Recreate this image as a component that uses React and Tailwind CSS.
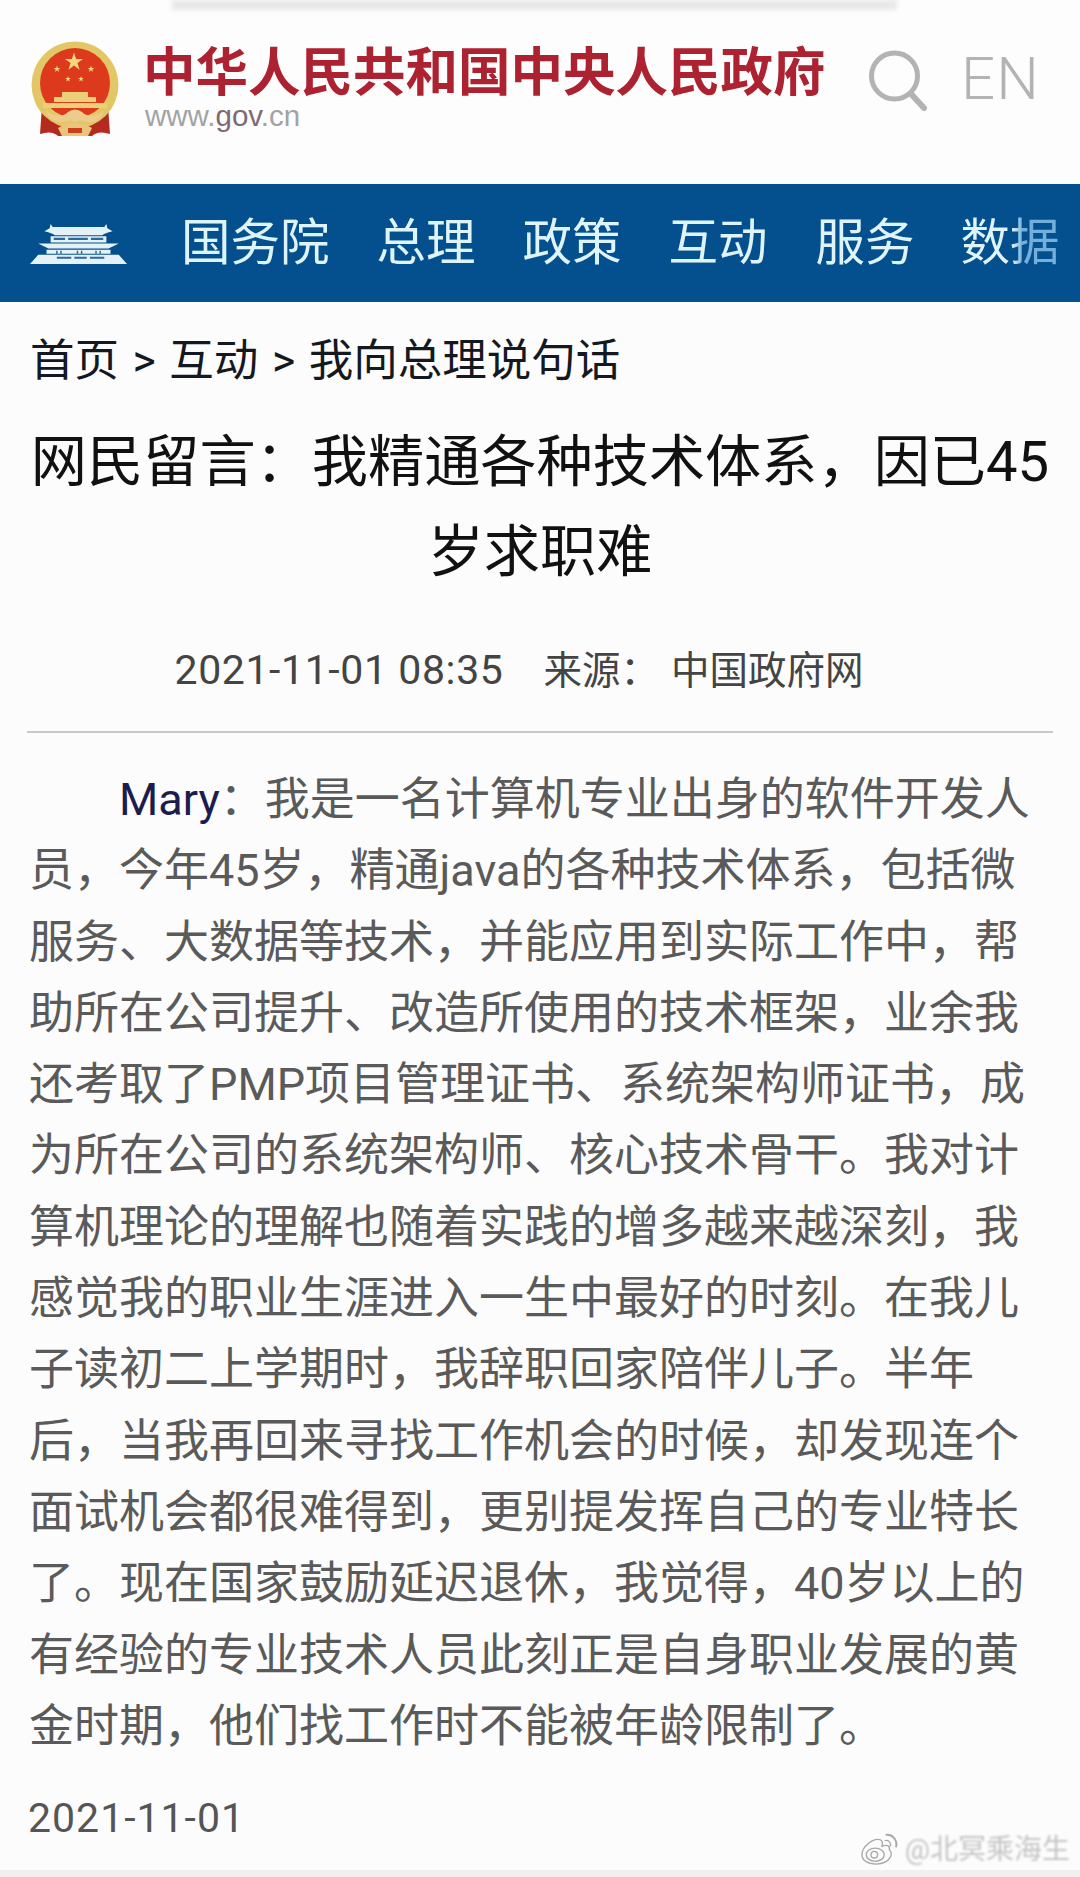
import React from "react";

const FONT = "font-['Roboto','Noto_Sans_CJK_SC',sans-serif]";

const LINES = [
  "员，今年45岁，精通java的各种技术体系，包括微",
  "服务、大数据等技术，并能应用到实际工作中，帮",
  "助所在公司提升、改造所使用的技术框架，业余我",
  "还考取了PMP项目管理证书、系统架构师证书，成",
  "为所在公司的系统架构师、核心技术骨干。我对计",
  "算机理论的理解也随着实践的增多越来越深刻，我",
  "感觉我的职业生涯进入一生中最好的时刻。在我儿",
  "子读初二上学期时，我辞职回家陪伴儿子。半年",
  "后，当我再回来寻找工作机会的时候，却发现连个",
  "面试机会都很难得到，更别提发挥自己的专业特长",
  "了。现在国家鼓励延迟退休，我觉得，40岁以上的",
  "有经验的专业技术人员此刻正是自身职业发展的黄",
  "金时期，他们找工作时不能被年龄限制了。",
];

function star(cx, cy, r, rot = 0) {
  const pts = [];
  for (let i = 0; i < 10; i++) {
    const a = (-90 + rot + i * 36) * (Math.PI / 180);
    const rad = i % 2 === 0 ? r : r * 0.38;
    pts.push(`${(cx + rad * Math.cos(a)).toFixed(2)},${(cy + rad * Math.sin(a)).toFixed(2)}`);
  }
  return pts.join(" ");
}

function Emblem() {
  return (
    <svg width="90" height="97" viewBox="0 0 90 97" className="shrink-0 blur-[0.6px]">
      <path d="M12 66 L10 94 Q22 90 28 96 L62 96 Q68 90 80 94 L78 66 Z" fill="#b52a1e" />
      <circle cx="45" cy="45" r="43.5" fill="#e3c766" />
      <circle cx="45" cy="43" r="35" fill="#dd3a1d" />
      <polygon points={star(44, 22, 9.5)} fill="#f2d67a" />
      <polygon points={star(27, 29, 3.6)} fill="#f2d67a" />
      <polygon points={star(61, 29, 3.6)} fill="#f2d67a" />
      <polygon points={star(38, 39, 3)} fill="#f2d67a" />
      <polygon points={star(51, 39, 3)} fill="#f2d67a" />
      <path d="M32 52 H58 V57 H66 V62 H24 V57 H32 Z" fill="#ecd078" />
      <path d="M13 63 H77 V68 H13 Z" fill="#ecd078" />
      <path d="M16 71 Q30 80 38 72 Q45 67 52 72 Q60 80 74 71 Q70 84 56 82 Q50 79 45 82 Q40 79 34 82 Q20 84 16 71 Z" fill="#eccb8c" />
      <path d="M28 88 Q45 78 62 88 L58 96 H32 Z" fill="#ebc47c" />
      <path d="M38 88 H52 V93 H38 Z" fill="#c9401f" />
    </svg>
  );
}

function Gate() {
  return (
    <svg width="97" height="43" viewBox="0 0 94 42" preserveAspectRatio="none" className="shrink-0 blur-[0.4px]">
      <path d="M14 9 L19 6 L20 2 L22 5 H72 L74 2 L75 6 L80 9 Q72 11 70 13 H24 Q22 11 14 9 Z" fill="#e4f2f8" />
      <path d="M20 14 H74 V20 H20 Z" fill="#e4f2f8" />
      <path d="M23 15.5 H34 V17.5 H23 Z M37 15.5 H56 V17.5 H37 Z M59 15.5 H71 V17.5 H59 Z" fill="#2a6a9c" />
      <path d="M8 21 H86 Q80 24 76 26 H18 Q14 24 8 21 Z" fill="#e4f2f8" />
      <path d="M16 27 H78 V31 H16 Z" fill="#e4f2f8" />
      <path d="M26 28 V34 M30 28 V34 M46 28 V34 M50 28 V34 M64 28 V34 M68 28 V34" stroke="#2a6a9c" strokeWidth="1.4" />
      <path d="M0 41 L8 32 H86 L94 41 Z" fill="#e4f2f8" />
      <path d="M26 34 H40 V36 H26 Z M43 34 H55 V36 H43 Z M58 34 H72 V36 H58 Z" fill="#2a6a9c" />
    </svg>
  );
}

function SearchIcon() {
  return (
    <svg width="60" height="62" viewBox="0 0 60 62" className="shrink-0">
      <circle cx="26.5" cy="26" r="23" fill="none" stroke="#b3b3b3" strokeWidth="5" />
      <path d="M44 45 L56 58" stroke="#b3b3b3" strokeWidth="6" strokeLinecap="round" />
    </svg>
  );
}

function WeiboIcon() {
  return (
    <svg width="40" height="34" viewBox="0 0 42 36" fill="none" stroke="#a8a8a8" strokeWidth="1.4" className="shrink-0">
      <path d="M3 23 C3 14 15 5 22 7 C25 8 25 11 24 14 C29 12 33 13 32 18 C36 20 35 32 18 33 C9 33 3 29 3 23 Z" fill="#fbfbfb" />
      <ellipse cx="17" cy="23" rx="9.5" ry="7" />
      <circle cx="16" cy="23" r="3.5" />
      <path d="M27 8 C31 7 34 10 33 14" />
      <path d="M28 2 C35 1 41 7 39 15" strokeWidth="2" />
    </svg>
  );
}

export default function App() {
  return (
    <div className={`${FONT} w-[1080px] h-[1877px] overflow-hidden bg-[#fcfcfc] flex flex-col`}>
      <header className="relative h-[184px] shrink-0 flex items-start pl-[30px] pt-[40px] bg-[#fdfdfd]">
        <div className="absolute left-[172px] top-0 w-[725px] h-[10px] bg-[#e8e8e8] blur-[2px]" />
        <Emblem />
        <div className="ml-[23px] w-[688px] flex flex-col">
          <div className="text-[52.5px] leading-[60px] font-bold text-[#ad2231] whitespace-nowrap mt-[-2px] font-['Noto_Sans_CJK_SC',sans-serif]">中华人民共和国中央人民政府</div>
          <div className="pl-[2px] text-[29.5px] leading-[30px] text-[#a3a3a3] mt-[3px] font-['Liberation_Sans',sans-serif]">
            www.<span className="text-[#7d6a72]">gov</span>.cn
          </div>
        </div>
        <div className="ml-[37px] mt-[10px]"><SearchIcon /></div>
        <div className="ml-[33px] mt-[9px] text-[60px] leading-[60px] tracking-[1px] text-[#b3b3b3] font-['Roboto',sans-serif] font-light">EN</div>
      </header>

      <nav className="h-[118px] shrink-0 bg-[#04508f] flex items-center pl-[30px] text-[49.5px] leading-[60px] text-[#dff4f9] whitespace-nowrap overflow-hidden">
        <Gate />
        <span className="ml-[54px]">国务院</span>
        <span className="ml-[47px]">总理</span>
        <span className="ml-[47px]">政策</span>
        <span className="ml-[47px]">互动</span>
        <span className="ml-[48px]">服务</span>
        <span className="ml-[46px] bg-[linear-gradient(90deg,#dff4f9_52%,#74aedb_62%)] bg-clip-text text-transparent">数据</span>
      </nav>

      <div className="h-[112px] shrink-0 flex items-center pt-[7px] pl-[30px] text-[44.5px] text-[#141821] whitespace-pre">
        <span>首页 <span className="mx-[2.5px]">&gt;</span> 互动 <span className="mx-[2.5px]">&gt;</span> 我向总理说句话</span>
      </div>

      <h1 className="mt-[3px] shrink-0 text-center text-[56.2px] leading-[90px] text-[#111111] font-normal whitespace-nowrap">
        <div>网民留言：我精通各种技术体系，因已45</div>
        <div>岁求职难</div>
      </h1>

      <div className="mt-[42px] h-[64px] pr-[42px] shrink-0 flex items-center justify-center text-[38.5px] text-[#444444] whitespace-nowrap">
        <span className="text-[41px] tracking-[0.6px]">2021-11-01 08:35</span>
        <span className="ml-[40px]">来源：</span>
        <span className="ml-[12px]">中国政府网</span>
      </div>

      <div className="mt-[28px] mx-[27px] h-[2px] shrink-0 bg-[#c9c9c9]" />

      <div className="mt-[31px] pl-[29px] shrink-0 text-[45px] leading-[71.3px] text-[#5a5a5a] whitespace-nowrap">
        <div className="pl-[90px]"><span className="text-[#1c1c4e]">Mary</span>：我是一名计算机专业出身的软件开发人</div>
        {LINES.map((l) => (
          <div key={l}>{l}</div>
        ))}
      </div>

      <div className="relative mt-[24px] flex-1 pl-[28px]">
        <div className="text-[41px] leading-[64px] tracking-[1px] text-[#555555]">2021-11-01</div>
      </div>

      <div className="relative h-[7px] shrink-0 bg-[#f0f0f0]">
        <div className="absolute right-[10px] bottom-[7px] flex items-center gap-[6px]">
          <WeiboIcon />
          <span className="text-[28px] leading-[40px] text-[#c4c4c4] blur-[1.2px] whitespace-nowrap">@北冥乘海生</span>
        </div>
      </div>
    </div>
  );
}
